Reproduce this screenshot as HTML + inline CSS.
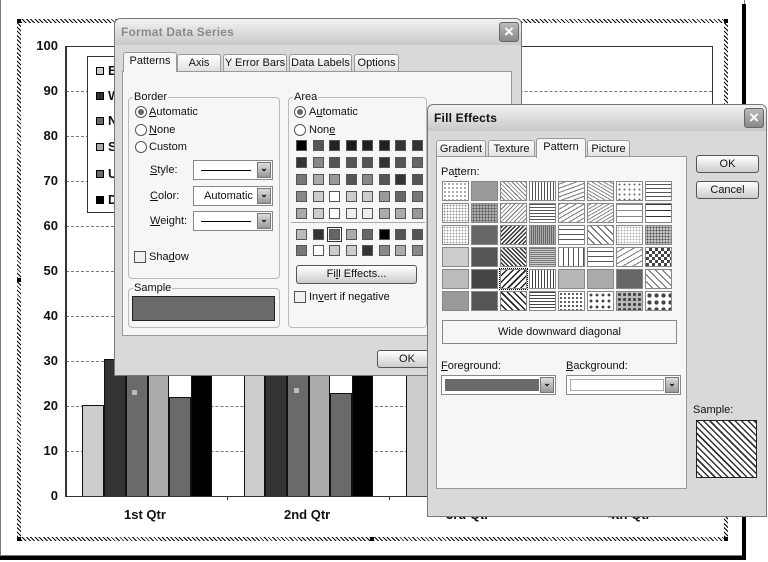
<!DOCTYPE html>
<html><head><meta charset="utf-8">
<style>
*{box-sizing:border-box;margin:0;padding:0}
body{width:768px;height:562px;background:#fff;position:relative;overflow:hidden;font-family:"Liberation Sans",sans-serif;font-size:11px;color:#111}
.a{position:absolute}
.hatch{background:repeating-linear-gradient(45deg,#000 0 1px,#fff 1px 3px)}
.dlg{background:#d9d9d9;border:1px solid #777;border-radius:6px 6px 0 0}
.tb{position:absolute;left:0;right:0;top:0;height:26px;border-radius:6px 6px 0 0;background:linear-gradient(#f2f2f2,#c9c9c9);font-weight:bold;font-size:12px;padding:6px 6px;letter-spacing:.2px}
.xb{position:absolute;width:20px;height:20px;border:1px solid #666;border-radius:3px;background:linear-gradient(#bbb,#888);color:#fff;font-size:17px;line-height:17px;text-align:center;font-weight:bold}
.tab{position:absolute;height:18px;border:1px solid #999;border-bottom:none;background:linear-gradient(#fff,#ddd);font-size:11px;text-align:center;line-height:16px;border-radius:3px 3px 0 0}
.tab.on{background:#f6f6f6;height:20px;z-index:2}
.panel{position:absolute;background:#f6f6f6;border:1px solid #999}
.grp{position:absolute;border:1px solid #bbb;border-radius:4px}
.grp>span{position:absolute;top:-7px;left:4px;background:#f6f6f6;padding:0 1px;font-size:11px;line-height:12px}
.rad{position:absolute;width:12px;height:12px;border:1px solid #555;border-radius:50%;background:#fff}
.rad.on::after{content:"";position:absolute;left:2px;top:2px;width:6px;height:6px;border-radius:50%;background:#666}
.chk{position:absolute;width:12px;height:12px;border:1px solid #555;background:#f0f0f0}
.lbl{position:absolute;font-size:11px;white-space:nowrap}
.btn{position:absolute;border:1px solid #555;border-radius:3px;background:linear-gradient(#fff,#ccc);text-align:center;font-size:11px}
.combo{position:absolute;border:1px solid #888;background:#fff}
.dd{position:absolute;right:1px;top:1px;bottom:1px;width:14px;background:linear-gradient(#ddd,#999);border:1px solid #777;font-size:9px;text-align:center;color:#000;font-weight:bold}
.sw{position:absolute;width:11px;height:11px;border:1px solid #555}
.pc{position:absolute;width:27px;height:20px;border:1px solid #888}
.ylab{position:absolute;left:28px;width:30px;text-align:right;font-weight:bold;font-size:13px}
.grid{position:absolute;left:66px;width:646px;border-top:1px dashed #777}
.bar{position:absolute;border:1px solid #111;border-bottom:none}
</style></head><body>

<!-- page frame -->
<div class="a" style="left:0;top:0;width:745px;height:556px;border:1px solid #777;border-top:none"></div>
<div class="a" style="left:742px;top:4px;width:4px;height:556px;background:#000"></div>
<div class="a" style="left:0;top:556px;width:746px;height:4px;background:#000"></div>

<!-- hatched chart border -->
<div class="a hatch" style="left:17px;top:19px;width:711px;height:4px"></div>
<div class="a hatch" style="left:17px;top:537px;width:711px;height:4px"></div>
<div class="a hatch" style="left:17px;top:19px;width:4px;height:522px"></div>
<div class="a hatch" style="left:724px;top:19px;width:4px;height:522px"></div>
<div class="a" style="left:17px;top:19px;width:4px;height:4px;background:#000"></div>
<div class="a" style="left:724px;top:19px;width:4px;height:4px;background:#000"></div>
<div class="a" style="left:17px;top:537px;width:4px;height:4px;background:#000"></div>
<div class="a" style="left:724px;top:537px;width:4px;height:4px;background:#000"></div>
<div class="a" style="left:17px;top:278px;width:4px;height:4px;background:#000"></div>
<div class="a" style="left:370px;top:537px;width:4px;height:4px;background:#000"></div>

<!-- plot -->
<div class="a" style="left:66px;top:46px;width:647px;height:451px;border-right:1px solid #333;border-top:1px solid #333"></div>
<div class="grid" style="top:91px"></div><div class="grid" style="top:136px"></div><div class="grid" style="top:181px"></div><div class="grid" style="top:226px"></div><div class="grid" style="top:271px"></div><div class="grid" style="top:316px"></div><div class="grid" style="top:361px"></div><div class="grid" style="top:406px"></div><div class="grid" style="top:451px"></div>
<div class="ylab" style="top:38px">100</div><div class="ylab" style="top:83px">90</div><div class="ylab" style="top:128px">80</div><div class="ylab" style="top:173px">70</div><div class="ylab" style="top:218px">60</div><div class="ylab" style="top:263px">50</div><div class="ylab" style="top:308px">40</div><div class="ylab" style="top:353px">30</div><div class="ylab" style="top:398px">20</div><div class="ylab" style="top:443px">10</div><div class="ylab" style="top:488px">0</div>

<div class="bar" style="left:82px;top:405px;width:22px;height:91px;background:#ccc"></div>
<div class="bar" style="left:104px;top:359px;width:22px;height:137px;background:#333"></div>
<div class="bar" style="left:126px;top:340px;width:22px;height:156px;background:#6a6a6a"></div>
<div class="bar" style="left:148px;top:340px;width:21px;height:156px;background:#aaa"></div>
<div class="bar" style="left:169px;top:397px;width:22px;height:99px;background:#6a6a6a"></div>
<div class="bar" style="left:191px;top:340px;width:21px;height:156px;background:#000"></div>
<div class="a" style="left:132px;top:390px;width:5px;height:5px;background:#bbb"></div>
<div class="bar" style="left:244px;top:340px;width:21px;height:156px;background:#ccc"></div>
<div class="bar" style="left:265px;top:340px;width:22px;height:156px;background:#333"></div>
<div class="bar" style="left:287px;top:340px;width:22px;height:156px;background:#6a6a6a"></div>
<div class="bar" style="left:309px;top:340px;width:21px;height:156px;background:#aaa"></div>
<div class="bar" style="left:330px;top:393px;width:22px;height:103px;background:#6a6a6a"></div>
<div class="bar" style="left:352px;top:340px;width:21px;height:156px;background:#000"></div>
<div class="a" style="left:294px;top:388px;width:5px;height:5px;background:#bbb"></div>
<div class="bar" style="left:406px;top:340px;width:22px;height:156px;background:#ccc"></div>
<div class="a" style="left:65px;top:46px;width:2px;height:451px;background:#333"></div>
<div class="a" style="left:66px;top:496px;width:647px;height:1px;background:#333"></div>
<div class="a" style="left:227px;top:496px;width:1px;height:4px;background:#333"></div>
<div class="a" style="left:389px;top:496px;width:1px;height:4px;background:#333"></div>
<div class="lbl" style="left:124px;top:507px;font-weight:bold;font-size:13px">1st Qtr</div>
<div class="lbl" style="left:284px;top:507px;font-weight:bold;font-size:13px">2nd Qtr</div>
<div class="lbl" style="left:446px;top:507px;font-weight:bold;font-size:13px">3rd Qtr</div>
<div class="lbl" style="left:608px;top:507px;font-weight:bold;font-size:13px">4th Qtr</div>

<!-- legend -->
<div class="a" style="left:87px;top:56px;width:245px;height:157px;border:1px solid #333;background:#fff"></div>
<div class="a" style="left:96px;top:67px;width:8px;height:8px;border:1px solid #000;background:#ccc"></div><div class="lbl" style="left:108px;top:63px;font-weight:bold;font-size:13px">E</div>
<div class="a" style="left:96px;top:92px;width:8px;height:8px;border:1px solid #000;background:#333"></div><div class="lbl" style="left:108px;top:88px;font-weight:bold;font-size:13px">W</div>
<div class="a" style="left:96px;top:117px;width:8px;height:8px;border:1px solid #000;background:#6a6a6a"></div><div class="lbl" style="left:108px;top:113px;font-weight:bold;font-size:13px">N</div>
<div class="a" style="left:96px;top:143px;width:8px;height:8px;border:1px solid #000;background:#aaa"></div><div class="lbl" style="left:108px;top:139px;font-weight:bold;font-size:13px">S</div>
<div class="a" style="left:96px;top:170px;width:8px;height:8px;border:1px solid #000;background:#6a6a6a"></div><div class="lbl" style="left:108px;top:166px;font-weight:bold;font-size:13px">U</div>
<div class="a" style="left:96px;top:196px;width:8px;height:8px;border:1px solid #000;background:#000"></div><div class="lbl" style="left:108px;top:192px;font-weight:bold;font-size:13px">D</div>

<!-- Format Data Series -->
<div class="a dlg" style="left:114px;top:18px;width:408px;height:358px">
 <div class="tb" style="color:#8a8a8a">Format Data Series</div>
 <div class="xb" style="left:384px;top:3px">×</div>
 <div class="tab on" style="left:8px;top:33px;width:54px">Patterns</div>
 <div class="tab" style="left:62px;top:35px;width:44px">Axis</div>
 <div class="tab" style="left:108px;top:35px;width:64px">Y Error Bars</div>
 <div class="tab" style="left:174px;top:35px;width:63px">Data Labels</div>
 <div class="tab" style="left:239px;top:35px;width:45px">Options</div>
 <div class="panel" style="left:7px;top:52px;width:390px;height:265px"></div>
</div>
<div class="grp" style="left:128px;top:97px;width:152px;height:182px"><span>Border</span></div>
<div class="rad on" style="left:135px;top:106px"></div><div class="lbl" style="left:149px;top:106px"><u>A</u>utomatic</div>
<div class="rad" style="left:135px;top:124px"></div><div class="lbl" style="left:149px;top:124px"><u>N</u>one</div>
<div class="rad" style="left:135px;top:141px"></div><div class="lbl" style="left:149px;top:141px">Custom</div>
<div class="lbl" style="left:150px;top:164px"><u>S</u>tyle:</div>
<div class="combo" style="left:193px;top:160px;width:80px;height:20px"><div class="a" style="left:7px;top:9px;width:50px;height:1px;background:#000"></div><div class="dd">⌄</div></div>
<div class="lbl" style="left:150px;top:190px"><u>C</u>olor:</div>
<div class="combo" style="left:193px;top:186px;width:80px;height:20px"><div class="lbl" style="left:10px;top:3px">Automatic</div><div class="dd">⌄</div></div>
<div class="lbl" style="left:150px;top:215px"><u>W</u>eight:</div>
<div class="combo" style="left:193px;top:211px;width:80px;height:20px"><div class="a" style="left:7px;top:9px;width:50px;height:1px;background:#000"></div><div class="dd">⌄</div></div>
<div class="chk" style="left:134px;top:251px"></div><div class="lbl" style="left:149px;top:251px">Sha<u>d</u>ow</div>
<div class="grp" style="left:128px;top:288px;width:152px;height:40px"><span>Sample</span></div>
<div class="a" style="left:132px;top:296px;width:143px;height:25px;border:1px solid #222;background:#6a6a6a"></div>
<div class="grp" style="left:288px;top:97px;width:139px;height:231px"><span>Area</span></div>
<div class="rad on" style="left:294px;top:106px"></div><div class="lbl" style="left:309px;top:106px">A<u>u</u>tomatic</div>
<div class="rad" style="left:294px;top:124px"></div><div class="lbl" style="left:309px;top:124px">Non<u>e</u></div>
<div id="sw"></div>
<div class="a" style="left:291px;top:222px;width:134px;height:1px;background:#aaa"></div>
<div class="btn" style="left:296px;top:265px;width:121px;height:19px;line-height:17px">Fi<u>l</u>l Effects...</div>
<div class="chk" style="left:294px;top:291px"></div><div class="lbl" style="left:309px;top:291px">In<u>v</u>ert if negative</div>
<div class="btn" style="left:377px;top:350px;width:60px;height:18px;line-height:16px">OK</div>

<!-- Fill Effects -->
<div class="a dlg" style="left:427px;top:104px;width:340px;height:413px">
 <div class="tb" style="color:#111">Fill Effects</div>
 <div class="xb" style="left:316px;top:3px">×</div>
 <div class="tab" style="left:8px;top:35px;width:50px">Gradient</div>
 <div class="tab" style="left:60px;top:35px;width:47px">Texture</div>
 <div class="tab on" style="left:108px;top:33px;width:50px">Pattern</div>
 <div class="tab" style="left:159px;top:35px;width:43px">Picture</div>
 <div class="panel" style="left:8px;top:51px;width:251px;height:333px"></div>
</div>
<div class="lbl" style="left:441px;top:166px">Pa<u>t</u>tern:</div>
<div id="pat"></div>
<div class="a" style="left:442px;top:320px;width:235px;height:24px;border:1px solid #888;background:#f6f6f6;text-align:center;line-height:22px;font-size:11px">Wide downward diagonal</div>
<div class="lbl" style="left:441px;top:360px"><u>F</u>oreground:</div>
<div class="combo" style="left:441px;top:375px;width:115px;height:20px"><div class="a" style="left:3px;top:3px;width:94px;height:12px;background:#6a6a6a"></div><div class="dd">⌄</div></div>
<div class="lbl" style="left:566px;top:360px"><u>B</u>ackground:</div>
<div class="combo" style="left:566px;top:375px;width:115px;height:20px"><div class="a" style="left:3px;top:3px;width:94px;height:12px;border:1px solid #aaa"></div><div class="dd">⌄</div></div>
<div class="btn" style="left:696px;top:155px;width:63px;height:18px;line-height:16px">OK</div>
<div class="btn" style="left:696px;top:181px;width:63px;height:18px;line-height:16px">Cancel</div>
<div class="lbl" style="left:693px;top:404px">Sample:</div>
<div class="a" style="left:696px;top:420px;width:61px;height:58px;border:1px solid #222;background:repeating-linear-gradient(45deg,#fff 0 3px,#333 3px 4.5px)"></div>

<script>
var c=[["000","555","222","1a1a1a","222","222","333","333"],["333","888","555","555","555","333","555","666"],["777","aaa","999","555","888","555","333","555"],["888","ccc","fff","ccc","ccc","999","666","777"],["aaa","ccc","fff","eee","eee","aaa","aaa","999"]];
var c2=[["bbb","333","666","aaa","666","000","555","555"],["777","fff","ccc","ccc","333","888","aaa","888"]];
var h="";
c.forEach(function(r,i){r.forEach(function(v,j){h+='<div class="sw" style="left:'+(296+j*16.5)+'px;top:'+(140+i*17)+'px;background:#'+v+'"></div>';});});
c2.forEach(function(r,i){r.forEach(function(v,j){h+='<div class="sw" style="left:'+(296+j*16.5)+'px;top:'+(229+i*16)+'px;background:#'+v+(i==0&&j==2?';outline:1px solid #333;outline-offset:1px':'')+'"></div>';});});
document.getElementById("sw").innerHTML=h;
var P=[
"radial-gradient(#777 0.7px,#fff 1px) 0 0/4px 4px","#999","repeating-linear-gradient(45deg,#fff 0 2px,#777 2px 3px)","repeating-linear-gradient(90deg,#fff 0 2px,#555 2px 3px)","repeating-linear-gradient(-20deg,#fff 0 3px,#777 3px 4px)","repeating-linear-gradient(30deg,#fff 0 2px,#888 2px 3px)","radial-gradient(#666 0.8px,#fff 1px) 0 0/5px 5px","repeating-linear-gradient(0deg,#fff 0 3px,#555 3px 4px),repeating-linear-gradient(90deg,#fff 0 3px,#555 3px 4px)",
"radial-gradient(#888 0.7px,#fff 1px) 0 0/3px 3px","radial-gradient(#555 0.9px,#aaa 1px) 0 0/3px 3px","repeating-linear-gradient(-45deg,#fff 0 2px,#777 2px 3px)","repeating-linear-gradient(0deg,#fff 0 2px,#555 2px 3px)","repeating-linear-gradient(-30deg,#fff 0 3px,#777 3px 4px)","repeating-linear-gradient(-30deg,#fff 0 2px,#888 2px 3px)","repeating-linear-gradient(0deg,#fff 0 5px,#888 5px 6px)","repeating-linear-gradient(0deg,#fff 0 5px,#333 5px 6px)",
"radial-gradient(#999 0.7px,#fff 1px) 0 0/3px 3px","#666","repeating-linear-gradient(-45deg,#fff 0 1.5px,#333 1.5px 3px)","repeating-linear-gradient(90deg,#aaa 0 1px,#666 1px 2px)","repeating-linear-gradient(0deg,#fff 0 4px,#555 4px 5px)","repeating-linear-gradient(45deg,#fff 0 4px,#555 4px 5px)","radial-gradient(#aaa 0.7px,#fff 1px) 0 0/3px 3px","radial-gradient(#444 1px,#ddd 1.2px) 0 0/3px 3px",
"#ccc","#555","repeating-linear-gradient(45deg,#fff 0 1.5px,#333 1.5px 3px)","repeating-linear-gradient(0deg,#ccc 0 1px,#777 1px 2px)","repeating-linear-gradient(90deg,#fff 0 4px,#555 4px 5px)","repeating-linear-gradient(0deg,#fff 0 4px,#555 4px 5px)","repeating-linear-gradient(-30deg,#fff 0 4px,#777 4px 5px)","conic-gradient(#444 25%,#fff 0 50%,#444 0 75%,#fff 0) 0 0/6px 6px",
"#bbb","#444","repeating-linear-gradient(-45deg,#fff 0 3px,#222 3px 4.5px)","repeating-linear-gradient(90deg,#fff 0 2px,#444 2px 3px)","radial-gradient(#888 0.7px,#fff 1px) 0 0/2px 2px","#aaa","#666","repeating-linear-gradient(45deg,#fff 0 4px,#666 4px 5px),repeating-linear-gradient(-45deg,#fff 0 4px,#666 4px 5px)",
"#999","#555","repeating-linear-gradient(45deg,#fff 0 3px,#222 3px 4.5px)","repeating-linear-gradient(0deg,#fff 0 2px,#444 2px 3px)","radial-gradient(#555 1px,#fff 1.3px) 0 0/4px 4px","radial-gradient(#444 1.3px,#fff 1.6px) 0 0/6px 6px","radial-gradient(#444 1.5px,#bbb 1.8px) 0 0/5px 5px","radial-gradient(#444 2px,#fff 2.3px) 0 0/7px 7px"];
var g="";
P.forEach(function(b,i){var r=Math.floor(i/8),k=i%8;g+='<div class="pc" style="left:'+(442+k*29)+'px;top:'+(181+r*22)+'px;background:'+b+(i==34?';outline:1px dotted #000':'')+'"></div>';});
document.getElementById("pat").innerHTML=g;
</script>
</body></html>
